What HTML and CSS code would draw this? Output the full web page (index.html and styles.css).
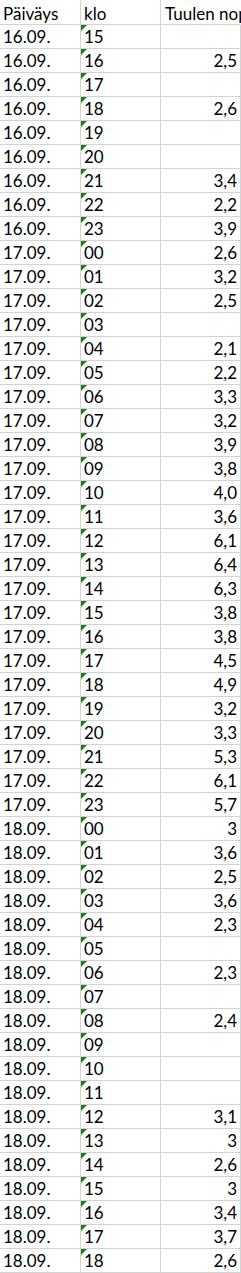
FILE: index.html
```html
<!DOCTYPE html>
<html lang="fi">
<head>
<meta charset="utf-8">
<title>Tuulen nopeus</title>
<link rel="stylesheet" href="styles.css">
</head>
<body>
<div class="sheet">
  <div class="cell head">Päiväys</div><div class="cell head">klo</div><div class="cell head overflow">Tuulen nopeus (m/s)</div>

  <div class="cell">16.09.</div><div class="cell txt">15</div><div class="cell num"></div>
  <div class="cell">16.09.</div><div class="cell txt">16</div><div class="cell num">2,5</div>
  <div class="cell">16.09.</div><div class="cell txt">17</div><div class="cell num"></div>
  <div class="cell">16.09.</div><div class="cell txt">18</div><div class="cell num">2,6</div>
  <div class="cell">16.09.</div><div class="cell txt">19</div><div class="cell num"></div>
  <div class="cell">16.09.</div><div class="cell txt">20</div><div class="cell num"></div>
  <div class="cell">16.09.</div><div class="cell txt">21</div><div class="cell num">3,4</div>
  <div class="cell">16.09.</div><div class="cell txt">22</div><div class="cell num">2,2</div>
  <div class="cell">16.09.</div><div class="cell txt">23</div><div class="cell num">3,9</div>

  <div class="cell">17.09.</div><div class="cell txt">00</div><div class="cell num">2,6</div>
  <div class="cell">17.09.</div><div class="cell txt">01</div><div class="cell num">3,2</div>
  <div class="cell">17.09.</div><div class="cell txt">02</div><div class="cell num">2,5</div>
  <div class="cell">17.09.</div><div class="cell txt">03</div><div class="cell num"></div>
  <div class="cell">17.09.</div><div class="cell txt">04</div><div class="cell num">2,1</div>
  <div class="cell">17.09.</div><div class="cell txt">05</div><div class="cell num">2,2</div>
  <div class="cell">17.09.</div><div class="cell txt">06</div><div class="cell num">3,3</div>
  <div class="cell">17.09.</div><div class="cell txt">07</div><div class="cell num">3,2</div>
  <div class="cell">17.09.</div><div class="cell txt">08</div><div class="cell num">3,9</div>
  <div class="cell">17.09.</div><div class="cell txt">09</div><div class="cell num">3,8</div>
  <div class="cell">17.09.</div><div class="cell txt">10</div><div class="cell num">4,0</div>
  <div class="cell">17.09.</div><div class="cell txt">11</div><div class="cell num">3,6</div>
  <div class="cell">17.09.</div><div class="cell txt">12</div><div class="cell num">6,1</div>
  <div class="cell">17.09.</div><div class="cell txt">13</div><div class="cell num">6,4</div>
  <div class="cell">17.09.</div><div class="cell txt">14</div><div class="cell num">6,3</div>
  <div class="cell">17.09.</div><div class="cell txt">15</div><div class="cell num">3,8</div>
  <div class="cell">17.09.</div><div class="cell txt">16</div><div class="cell num">3,8</div>
  <div class="cell">17.09.</div><div class="cell txt">17</div><div class="cell num">4,5</div>
  <div class="cell">17.09.</div><div class="cell txt">18</div><div class="cell num">4,9</div>
  <div class="cell">17.09.</div><div class="cell txt">19</div><div class="cell num">3,2</div>
  <div class="cell">17.09.</div><div class="cell txt">20</div><div class="cell num">3,3</div>
  <div class="cell">17.09.</div><div class="cell txt">21</div><div class="cell num">5,3</div>
  <div class="cell">17.09.</div><div class="cell txt">22</div><div class="cell num">6,1</div>
  <div class="cell">17.09.</div><div class="cell txt">23</div><div class="cell num">5,7</div>

  <div class="cell">18.09.</div><div class="cell txt">00</div><div class="cell num">3</div>
  <div class="cell">18.09.</div><div class="cell txt">01</div><div class="cell num">3,6</div>
  <div class="cell">18.09.</div><div class="cell txt">02</div><div class="cell num">2,5</div>
  <div class="cell">18.09.</div><div class="cell txt">03</div><div class="cell num">3,6</div>
  <div class="cell">18.09.</div><div class="cell txt">04</div><div class="cell num">2,3</div>
  <div class="cell">18.09.</div><div class="cell txt">05</div><div class="cell num"></div>
  <div class="cell">18.09.</div><div class="cell txt">06</div><div class="cell num">2,3</div>
  <div class="cell">18.09.</div><div class="cell txt">07</div><div class="cell num"></div>
  <div class="cell">18.09.</div><div class="cell txt">08</div><div class="cell num">2,4</div>
  <div class="cell">18.09.</div><div class="cell txt">09</div><div class="cell num"></div>
  <div class="cell">18.09.</div><div class="cell txt">10</div><div class="cell num"></div>
  <div class="cell">18.09.</div><div class="cell txt">11</div><div class="cell num"></div>
  <div class="cell">18.09.</div><div class="cell txt">12</div><div class="cell num">3,1</div>
  <div class="cell">18.09.</div><div class="cell txt">13</div><div class="cell num">3</div>
  <div class="cell">18.09.</div><div class="cell txt">14</div><div class="cell num">2,6</div>
  <div class="cell">18.09.</div><div class="cell txt">15</div><div class="cell num">3</div>
  <div class="cell">18.09.</div><div class="cell txt">16</div><div class="cell num">3,4</div>
  <div class="cell">18.09.</div><div class="cell txt">17</div><div class="cell num">3,7</div>
  <div class="cell">18.09.</div><div class="cell txt">18</div><div class="cell num">2,6</div>
</div>
</body>
</html>
```

FILE: styles.css
```css
html, body {
  margin: 0;
  padding: 0;
  background: #ffffff;
  overflow: hidden;
}

.sheet {
  display: grid;
  grid-template-columns: 81px 80px 80px;
  grid-template-rows: 25px;
  grid-auto-rows: 24px;
  font-family: Lato, "Open Sans", sans-serif;
  font-size: 17px;
  color: #000000;
}

.cell {
  position: relative;
  box-sizing: border-box;
  border-right: 1px solid #d4d4d4;
  border-bottom: 1px solid #d4d4d4;
  padding: 0 3px;
  line-height: 23px;
  white-space: nowrap;
  overflow: hidden;
}

.head {
  padding-top: 2px;
}

.overflow {
  overflow: visible;
  border-right-color: transparent;
  padding-left: 4px;
}

.num {
  text-align: right;
}

.txt::before {
  content: "";
  position: absolute;
  left: 0;
  top: 0;
  width: 0;
  height: 0;
  border-top: 6px solid #1a7f1a;
  border-right: 6px solid transparent;
}
```
